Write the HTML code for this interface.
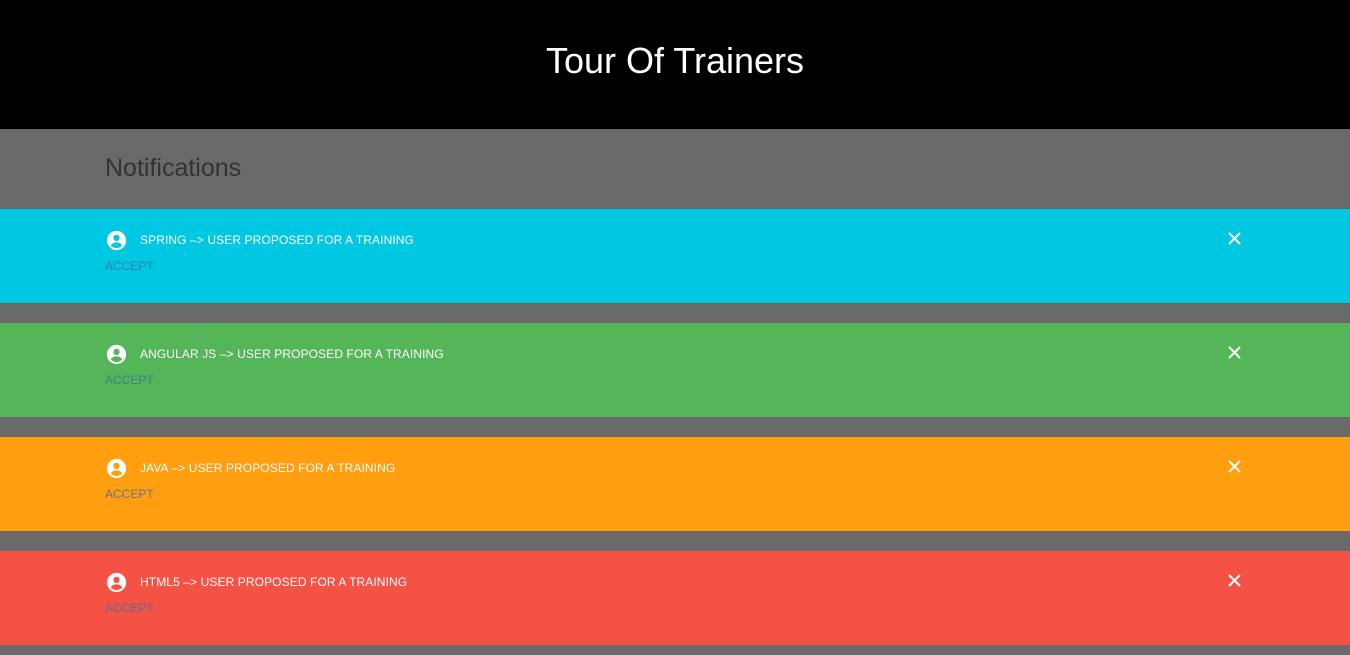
<!DOCTYPE html>
<html><head><style>
body{margin:0;width:1350px;height:655px;background:#696969;font-family:"Liberation Sans",Arial,sans-serif;overflow:hidden}
.hd{height:129px;background:#000;color:#fff;text-align:center;font-size:36px;line-height:122px}
.nt{height:80px;color:#333;font-size:25px;padding-left:105px;line-height:78px;box-sizing:border-box}
.c{height:94px;margin-bottom:20px;position:relative}
.ic{position:absolute;left:106px;top:21px}
.t{position:absolute;left:140px;top:24px;color:#fff;font-size:12px;letter-spacing:0.1px}
.a{position:absolute;left:105px;top:50px;color:#3b6fa8;font-size:12px;opacity:.8}
.x{position:absolute;left:1228px;top:23px}
</style></head><body>
<div class="hd">Tour Of Trainers</div>
<div class="nt">Notifications</div>
<div class="c" style="background:#00c8e3"><svg class="ic" width="21" height="21" viewBox="0 0 24 24"><circle cx="12" cy="12" r="11" fill="#fff"/><circle cx="12" cy="9" r="3.6" fill="#00c8e3"/><path d="M5.5 17.5c1.5-2.5 4-3.4 6.5-3.4s5 .9 6.5 3.4c-1.7 2-4 3-6.5 3s-4.8-1-6.5-3z" fill="#00c8e3"/></svg><div class="t">SPRING –&gt; USER PROPOSED FOR A TRAINING</div><div class="a">ACCEPT</div><svg class="x" width="13" height="13" viewBox="0 0 13 13"><path d="M1 1L12 12M12 1L1 12" stroke="#fff" stroke-width="2"/></svg></div>
<div class="c" style="background:#55b559"><svg class="ic" width="21" height="21" viewBox="0 0 24 24"><circle cx="12" cy="12" r="11" fill="#fff"/><circle cx="12" cy="9" r="3.6" fill="#55b559"/><path d="M5.5 17.5c1.5-2.5 4-3.4 6.5-3.4s5 .9 6.5 3.4c-1.7 2-4 3-6.5 3s-4.8-1-6.5-3z" fill="#55b559"/></svg><div class="t">ANGULAR JS –&gt; USER PROPOSED FOR A TRAINING</div><div class="a">ACCEPT</div><svg class="x" width="13" height="13" viewBox="0 0 13 13"><path d="M1 1L12 12M12 1L1 12" stroke="#fff" stroke-width="2"/></svg></div>
<div class="c" style="background:#ff9e0f"><svg class="ic" width="21" height="21" viewBox="0 0 24 24"><circle cx="12" cy="12" r="11" fill="#fff"/><circle cx="12" cy="9" r="3.6" fill="#ff9e0f"/><path d="M5.5 17.5c1.5-2.5 4-3.4 6.5-3.4s5 .9 6.5 3.4c-1.7 2-4 3-6.5 3s-4.8-1-6.5-3z" fill="#ff9e0f"/></svg><div class="t">JAVA –&gt; USER PROPOSED FOR A TRAINING</div><div class="a">ACCEPT</div><svg class="x" width="13" height="13" viewBox="0 0 13 13"><path d="M1 1L12 12M12 1L1 12" stroke="#fff" stroke-width="2"/></svg></div>
<div class="c" style="background:#f55246"><svg class="ic" width="21" height="21" viewBox="0 0 24 24"><circle cx="12" cy="12" r="11" fill="#fff"/><circle cx="12" cy="9" r="3.6" fill="#f55246"/><path d="M5.5 17.5c1.5-2.5 4-3.4 6.5-3.4s5 .9 6.5 3.4c-1.7 2-4 3-6.5 3s-4.8-1-6.5-3z" fill="#f55246"/></svg><div class="t">HTML5 –&gt; USER PROPOSED FOR A TRAINING</div><div class="a">ACCEPT</div><svg class="x" width="13" height="13" viewBox="0 0 13 13"><path d="M1 1L12 12M12 1L1 12" stroke="#fff" stroke-width="2"/></svg></div>
</body></html>
